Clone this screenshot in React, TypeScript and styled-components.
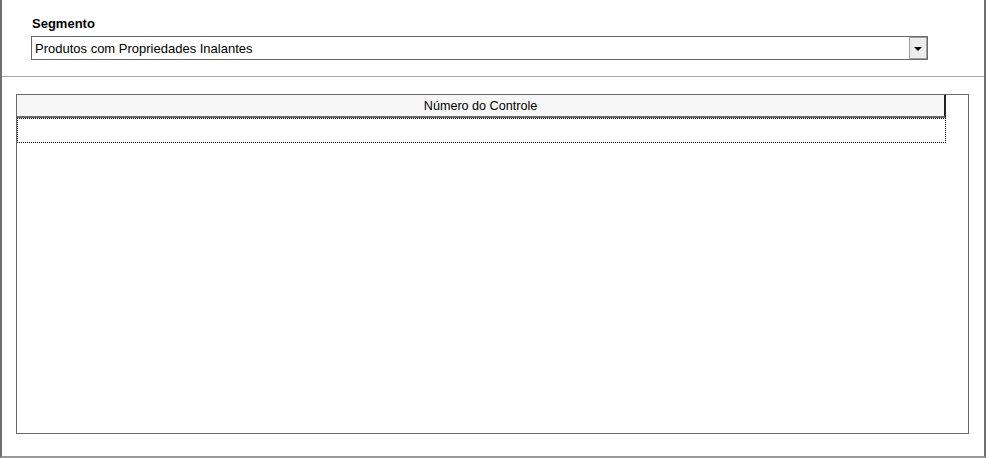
import styled, { createGlobalStyle } from "styled-components";

const GlobalStyle = createGlobalStyle`
  html, body {
    margin: 0;
    padding: 0;
    background: #ffffff;
  }
  body {
    font-family: "Liberation Sans", Arial, sans-serif;
    color: #000;
  }
`;

const Frame = styled.div`
  box-sizing: border-box;
  width: 986px;
  height: 458px;
  border-left: 2px solid #6f6f6f;
  border-right: 2px solid #6f6f6f;
  border-bottom: 2px solid #9a9a9a;
  display: flex;
  flex-direction: column;
`;

const FilterSection = styled.div`
  padding: 16px 0 0 29px;
  display: flex;
  flex-direction: column;
`;

const FieldLabel = styled.label`
  font-size: 13px;
  font-weight: bold;
  line-height: 16px;
  padding-left: 1px;
  margin-bottom: 4px;
`;

const SelectBox = styled.div`
  box-sizing: border-box;
  width: 897px;
  height: 24px;
  border: 1px solid #6a6a6a;
  display: flex;
  align-items: center;
  justify-content: space-between;
  background: #fff;
`;

const SelectValue = styled.span`
  font-size: 13px;
  padding-left: 3px;
`;

const DropButton = styled.span`
  box-sizing: border-box;
  width: 18px;
  height: 22px;
  border: 1px solid #a0a0a0;
  background: #ececec;
  display: flex;
  align-items: center;
  justify-content: center;
`;

const Arrow = styled.span`
  width: 0;
  height: 0;
  border-left: 4px solid transparent;
  border-right: 4px solid transparent;
  border-top: 4px solid #000;
  margin-top: 1px;
`;

const Separator = styled.hr`
  border: 0;
  border-top: 1px solid #a8a8a8;
  margin: 16px 0 0 0;
  height: 0;
`;

const GridPanel = styled.div`
  box-sizing: border-box;
  margin: 17px 15px 0 14px;
  height: 340px;
  border: 1px solid #6a6a6a;
  padding-right: 22px;
`;

const HeaderRow = styled.div`
  box-sizing: border-box;
  height: 23px;
  background: #f6f6f6;
  border-bottom: 2px solid #6a6a6a;
  border-right: 2px solid #222;
  display: flex;
  align-items: center;
  justify-content: center;
  font-size: 12.6px;
`;

const DataRow = styled.div`
  box-sizing: border-box;
  height: 25px;
  border: 1px dotted #000;
`;

export default function App() {
  return (
    <>
      <GlobalStyle />
      <Frame>
        <FilterSection>
          <FieldLabel>Segmento</FieldLabel>
          <SelectBox>
            <SelectValue>Produtos com Propriedades Inalantes</SelectValue>
            <DropButton>
              <Arrow />
            </DropButton>
          </SelectBox>
        </FilterSection>
        <Separator />
        <GridPanel>
          <HeaderRow>Número do Controle</HeaderRow>
          <DataRow />
        </GridPanel>
      </Frame>
    </>
  );
}
